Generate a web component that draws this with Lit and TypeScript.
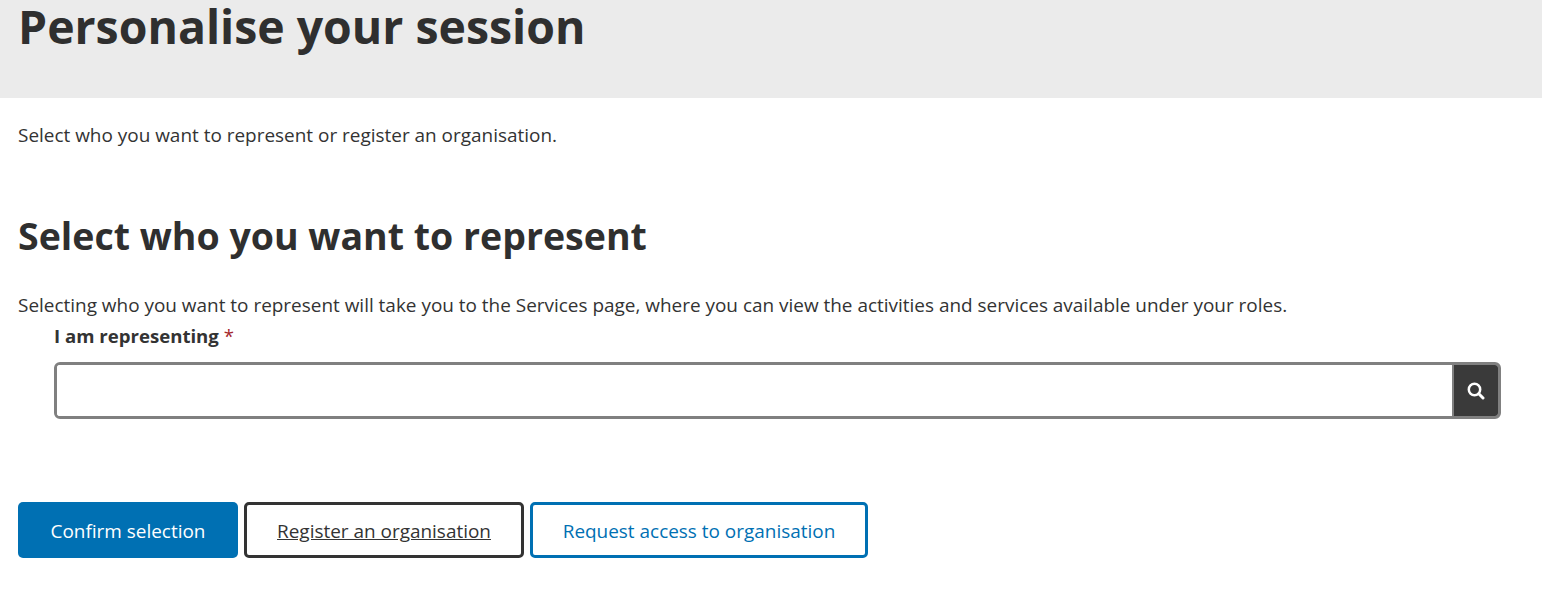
import { LitElement, html, css } from "lit";
import { customElement } from "lit/decorators.js";

@customElement("app-root")
export class AppRoot extends LitElement {
  static styles = css`
    :host { display: block; font-family: "Open Sans", sans-serif; color: #333; font-size: 18.95px; line-height: 24px; height: 602px; overflow: hidden; background: #fff; }
    * { box-sizing: border-box; }
    .band { background: #ebebeb; height: 98px; padding: 0 18px; }
    h1 { margin: 0; font-size: 46.4px; line-height: 52px; font-weight: 700; color: #2f2f2f; }
    .intro { margin: 25px 18px 0; }
    h2 { margin: 65px 18px 0; font-size: 37.5px; line-height: 48px; font-weight: 700; color: #2f2f2f; }
    .desc { margin: 33px 18px 0; }
    .field { margin: 0 41px 0 54px; }
    label { display: block; font-weight: 700; margin-top: 7px; font-size: 18.6px; }
    .req { color: #a4262c; font-weight: 400; }
    .lookup { display: flex; height: 57px; margin-top: 14px; border: 3px solid #808080; border-radius: 6px; overflow: hidden; }
    .lookup input { flex: 1; border: 0; outline: 0; background: #fff; }
    .lookup .go { width: 46px; background: #3a3a3a; border: 0; border-left: 2px solid #808080; display: flex; align-items: center; justify-content: center; padding: 0; }
    .actions { display: flex; gap: 6px; margin: 83px 18px 0; }
    .btn { height: 56px; display: flex; align-items: center; justify-content: center; border-radius: 5px; font-size: 18.95px; font-family: inherit; padding-top: 1px; }
    .primary { width: 220px; background: #0070b3; color: #fff; }
    .dark { width: 280px; border: 3px solid #333; color: #333; text-decoration: underline; background: #fff; }
    .outline { width: 338px; border: 3px solid #0070b3; color: #0070b3; background: #fff; }
  `;
  render() {
    return html`
      <div class="band"><h1>Personalise your session</h1></div>
      <p class="intro">Select who you want to represent or register an organisation.</p>
      <h2>Select who you want to represent</h2>
      <p class="desc">Selecting who you want to represent will take you to the Services page, where you can view the activities and services available under your roles.</p>
      <div class="field">
        <label>I am representing <span class="req">*</span></label>
        <div class="lookup">
          <input type="text" aria-label="I am representing" />
          <button class="go" aria-label="Search">
            <svg width="18" height="18" viewBox="0 0 18 18" fill="none" stroke="#fff"><circle cx="7.5" cy="7.5" r="5.7" stroke-width="2.5"/><path d="M11.8 11.8 16 16" stroke-width="3" stroke-linecap="round"/></svg>
          </button>
        </div>
      </div>
      <div class="actions">
        <div class="btn primary">Confirm selection</div>
        <div class="btn dark">Register an organisation</div>
        <div class="btn outline">Request access to organisation</div>
      </div>
    `;
  }
}
